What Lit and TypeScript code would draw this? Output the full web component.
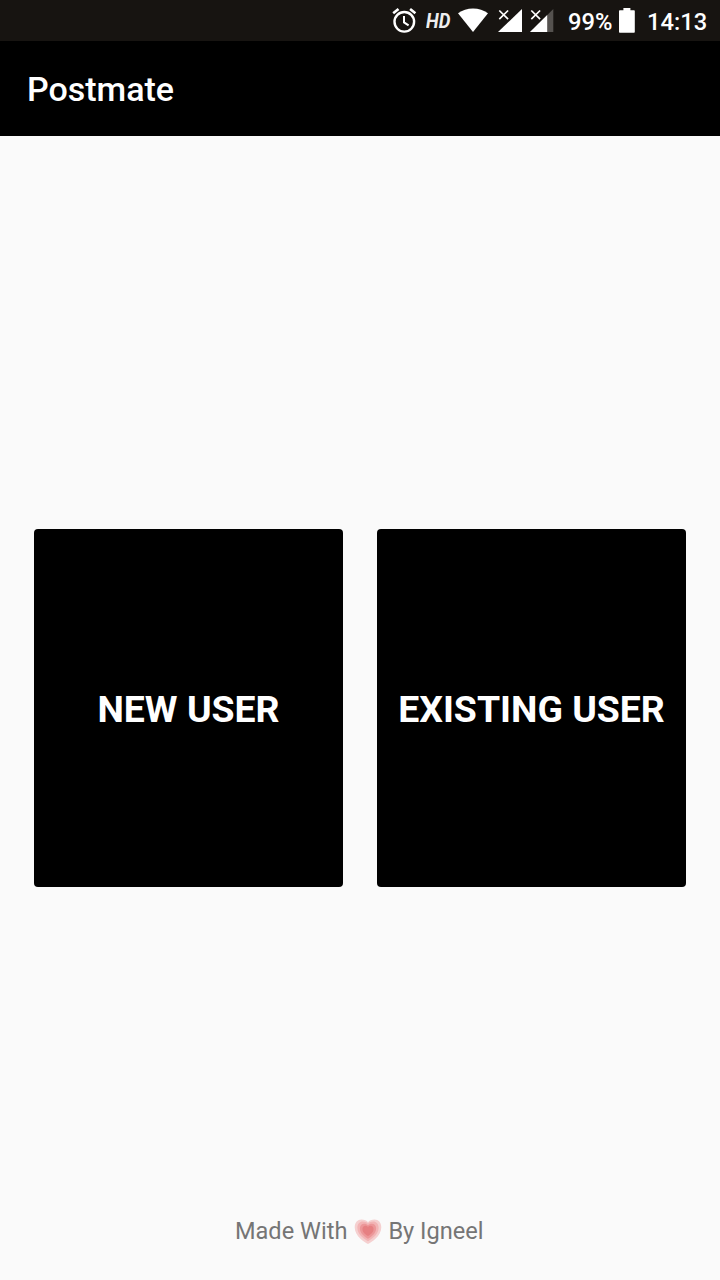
import { LitElement, html, css } from "lit";
import { customElement } from "lit/decorators.js";

@customElement("status-bar")
class StatusBar extends LitElement {
  static styles = css`
    :host {
      display: flex;
      height: 41px;
      box-sizing: border-box;
      background: #171411;
      color: #fff;
      justify-content: flex-end;
      align-items: center;
      padding-right: 13px;
      font: 500 23.7px/41px Roboto, sans-serif;
    }
    svg { display: block; flex: none; height: 41px; }
    .level { width: 50px; padding-top: 2px; box-sizing: border-box; height: 41px; }
    .time { width: 60px; margin-left: 12px; padding-top: 2px; box-sizing: border-box; height: 41px; white-space: nowrap; }
    .hd { width: 32px; padding-top: 1px; box-sizing: border-box; height: 41px; font: italic 700 19.5px/41px Roboto, sans-serif; }
    .hd span { display: inline-block; transform: scaleX(0.95); transform-origin: left; color: #eee; }
    .alarm { margin-right: 9px; }
    .wifi { margin-right: 10px; }
    .sim { margin-right: 8px; }
    .sim2 { margin-right: 14px; }
  `;
  render() {
    return html`
      <svg class="alarm" width="25" viewBox="392 0 25 41" fill="none" stroke="#fff">
        <circle cx="404.3" cy="21.8" r="9.8" stroke-width="2.4" />
        <path d="M393.2 13.2l5.3-4.3M415.4 13.2l-5.3-4.3" stroke-width="2.6" />
        <path d="M404 16v6.4l4.6 3" stroke-width="2" />
      </svg>
      <div class="hd"><span>HD</span></div>
      <svg class="wifi" width="30" viewBox="458 0 30 41" fill="#fff">
        <path d="M458 13.2Q464.5 8.5 473 8.5T488 13.2L473 32z" />
      </svg>
      <svg class="sim" width="24" viewBox="498 0 24 41">
        <path d="M522 9v23h-24z" fill="#fff" />
        <path d="M499.3 10.5l8.8 8.6m0-8.6l-8.8 8.6" stroke="#171411" stroke-width="4" />
        <path d="M499.3 10.5l8.8 8.6m0-8.6l-8.8 8.6" stroke="#fff" stroke-width="1.7" />
      </svg>
      <svg class="sim2" width="24" viewBox="530 0 24 41">
        <path d="M553.3 9v23H530z" fill="#55524f" />
        <path d="M547.2 15v17H530z" fill="#fff" />
        <path d="M531.3 10.5l8.8 8.6m0-8.6l-8.8 8.6" stroke="#171411" stroke-width="4" />
        <path d="M531.3 10.5l8.8 8.6m0-8.6l-8.8 8.6" stroke="#fff" stroke-width="1.7" />
      </svg>
      <div class="level">99%</div>
      <svg width="17" viewBox="618 0 17 41" fill="#fff">
        <path d="M623.4 8h7v2.3h3.6q.8 0 .8.8v20.8q0 .8-.8.8h-14.2q-.8 0-.8-.8V11.1q0-.8.8-.8h3.6z" />
      </svg>
      <div class="time">14:13</div>
    `;
  }
}

@customElement("app-root")
class AppRoot extends LitElement {
  static styles = css`
    :host {
      display: flex;
      flex-direction: column;
      height: 1280px;
      width: 720px;
      background: #fafafa;
      font-family: Roboto, sans-serif;
    }
    .bar {
      height: 95px;
      box-sizing: border-box;
      padding: 1px 0 0 27px;
      background: #000;
      color: #fff;
      font-size: 34px;
      font-weight: 500;
      line-height: 95px;
    }
    .choices {
      display: grid;
      grid-template-columns: 1fr 1fr;
      gap: 34px;
      padding: 393px 34px 0;
    }
    button {
      height: 358px;
      padding: 2px 0 0;
      border: 0;
      border-radius: 4px;
      background: #000;
      color: #fff;
      font: 700 37.4px/44px Roboto, sans-serif;
      white-space: nowrap;
    }
    footer {
      display: flex;
      justify-content: center;
      align-items: center;
      gap: 6.5px;
      margin-top: auto;
      padding: 0 1.5px 34px 0;
      height: 30px;
      font-size: 23.6px;
      line-height: 30px;
      color: #757575;
    }
    .heart { display: block; margin-top: 1px; }
  `;
  render() {
    return html`
      <status-bar></status-bar>
      <div class="bar">Postmate</div>
      <div class="choices">
        <button>NEW USER</button>
        <button>EXISTING USER</button>
      </div>
      <footer>
        <span>Made With</span>
        <svg class="heart" width="28" height="26" viewBox="-14 -12.5 28 26">
          <defs>
            <path id="h" d="M0 12.5C-3 11-13.3 5-13.3-4.2C-13.3-9-10.3-12-6.6-12C-3.5-12-1.2-11 0-9.3C1.2-11 3.5-12 6.600-12C10.3-12 13.3-9 13.3-4.200C13.3 5 3 11 0 12.500z" />
          </defs>
          <use href="#h" fill="#f5d0d0" />
          <use href="#h" fill="#f2b4b5" transform="translate(0 -.3) scale(.8)" />
          <use href="#h" fill="#ec9799" transform="translate(0 -.5) scale(.61)" />
          <use href="#h" fill="#e68082" transform="translate(0 -.7) scale(.42)" />
        </svg>
        <span>By Igneel</span>
      </footer>
    `;
  }
}
